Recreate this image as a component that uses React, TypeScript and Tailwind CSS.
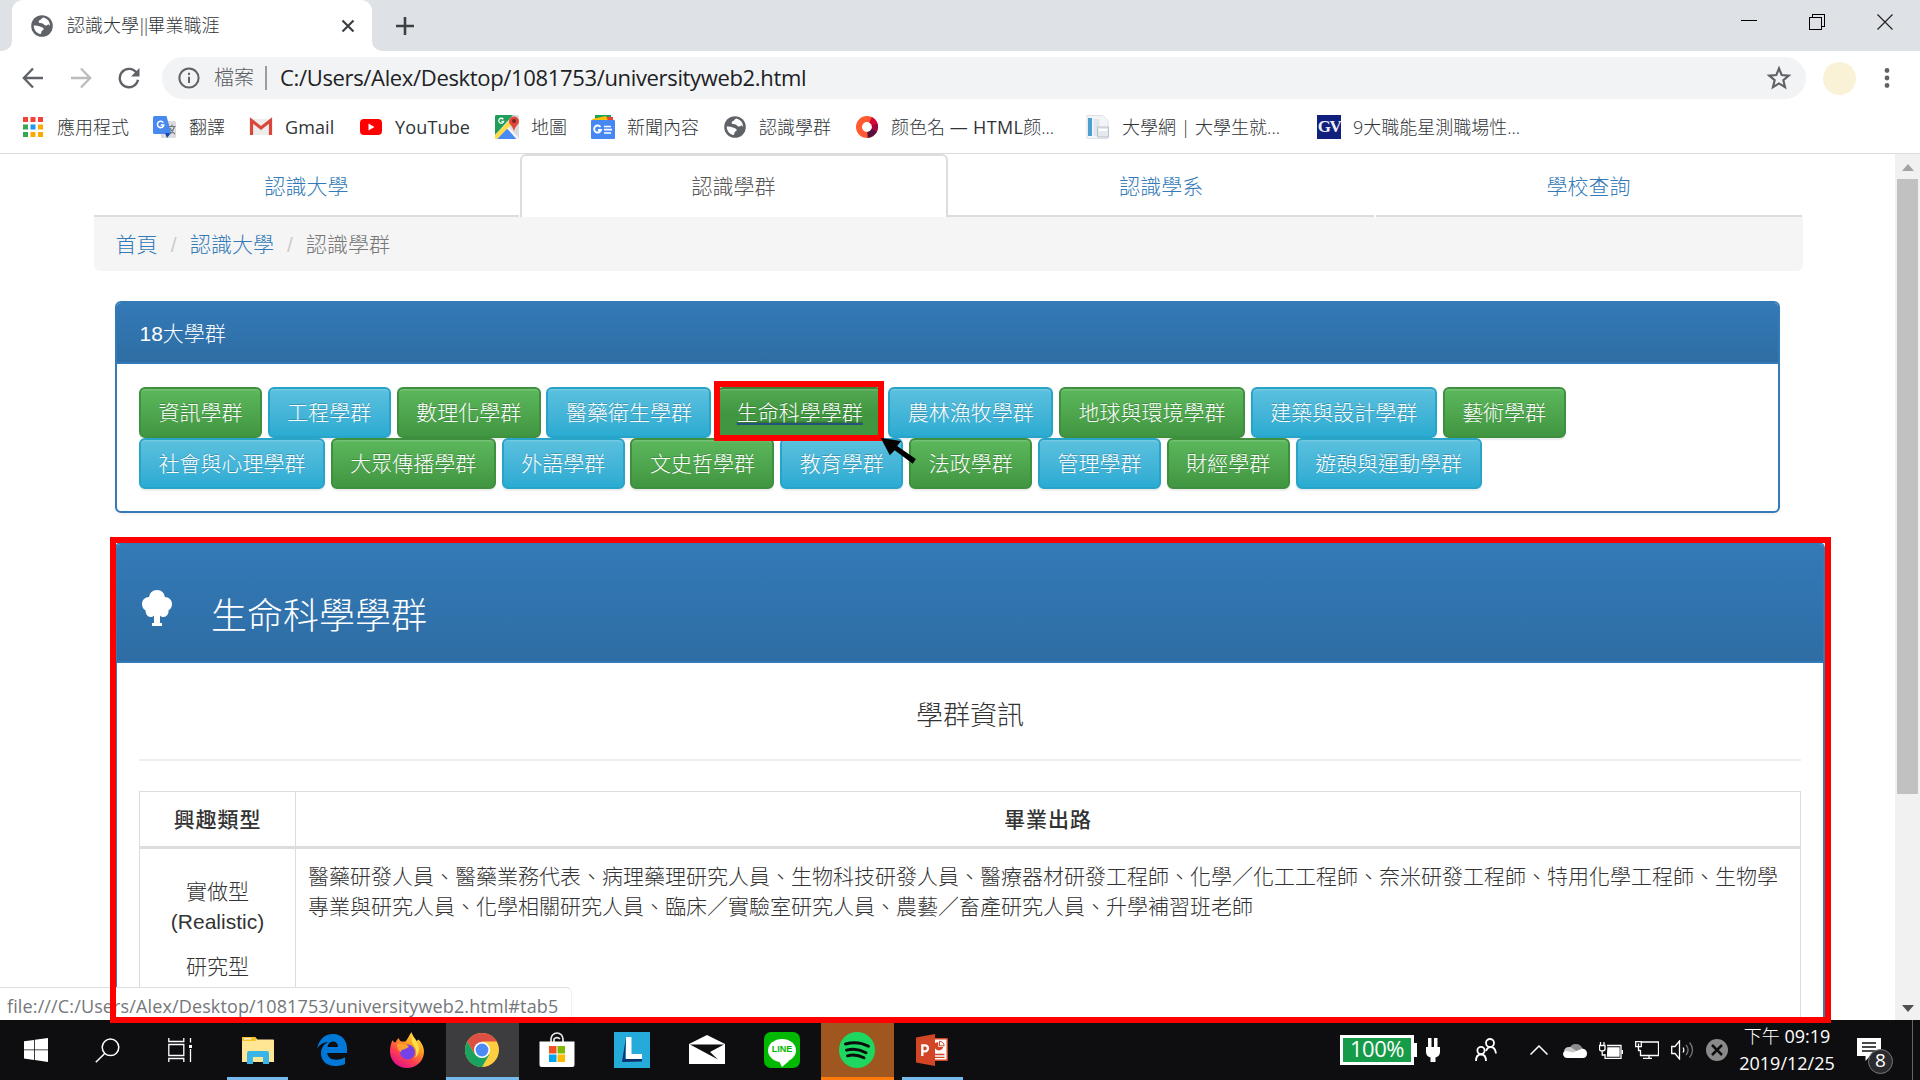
import React from "react";

const UI = "font-['Open_Sans','Noto_Sans_CJK_TC',sans-serif]";

function Globe({ className }: { className?: string }) {
  return (
    <svg viewBox="0 0 22 22" className={"h-[22px] w-[22px] shrink-0 " + (className ?? "")}>
      <circle cx="11" cy="11" r="10.8" fill="#5f6368" />
      <path d="M12.2 2.6c-1.5.4-1.3 1.6-2.7 2.2-1.6.6-2.2 1.6-1.6 2.6.8 1.2 2.2.6 3.6 1 1.700.5 1.800 1.900 3.200 2.100 1.500.2 1.900-1.300 2.900-1 .9.300 1.100 1.300 1.400 1.800.3-4.200-2.500-7.800-6.800-8.700z" fill="#fff" />
      <path d="M2.700 10.600c1.800-.2 4.300 0 6.200.9 1.800.8 3.800 1.200 3.800 2.600 0 1.300-1.700 1.300-2.200 2.300-.4.9 0 1.900-.9 2.700-3.800-.6-6.900-4.100-6.900-8.500z" fill="#fff" />
    </svg>
  );
}

function TabStrip() {
  return (
    <div className="flex h-[51px] bg-white">
      <div className="w-3 rounded-br-[10px] bg-[#dee1e6]" />
      <div className="w-[360px] bg-[#dee1e6]">
        <div className="flex h-full items-center rounded-t-[11px] bg-white pl-[19px]">
          <Globe />
          <span className="ml-[14px] w-[274px] whitespace-nowrap text-[18px] font-light text-[#303438]">認識大學<span className="-ml-[2px] mr-[2px] tracking-[-5.500px]">||</span>畢業職涯</span>
          <svg viewBox="0 0 14 14" className="h-[14px] w-[14px]" stroke="#3c4043" strokeWidth="2.200"><path d="M1.500 1.500l11 11M12.500 1.500l-11 11" /></svg>
        </div>
      </div>
      <div className="flex flex-1 items-center justify-between rounded-bl-[10px] bg-[#dee1e6] pl-6">
        <svg viewBox="0 0 18 18" className="h-[18px] w-[18px]" stroke="#3c4043" strokeWidth="2.600"><path d="M9 0v18M0 9h18" /></svg>
        <div className="flex gap-[52px] self-start pr-[27px] pt-[14px]">
          <svg viewBox="0 0 16 16" className="h-4 w-4" stroke="#000" shapeRendering="crispEdges"><path d="M0 6.500h16" /></svg>
          <svg viewBox="0 0 16 16" className="h-4 w-4" stroke="#000" fill="none" shapeRendering="crispEdges"><path d="M.5 3.500h11.500v11.500h-11.500zM3.500 3.500v-3h12v11.500h-3.500" /></svg>
          <svg viewBox="0 0 16 16" className="h-4 w-4" stroke="#222" strokeWidth="1.200"><path d="M.5.500l15 15M15.500.500l-15 15" /></svg>
        </div>
      </div>
    </div>
  );
}

function Toolbar() {
  return (
    <div className="flex h-[54px] items-center bg-white pl-[22px] [&>svg]:shrink-0">
      <svg viewBox="0 0 22 22" className="h-[22px] w-[22px]" fill="none" stroke="#5f6368" strokeWidth="2.300"><path d="M21 11H2M11 1.500L1.800 11l9.200 9.500" /></svg>
      <svg viewBox="0 0 22 22" className="ml-[26px] h-[22px] w-[22px]" fill="none" stroke="#babcbe" strokeWidth="2.300"><path d="M1 11h19M11 1.500l9.200 9.500-9.200 9.500" /></svg>
      <svg viewBox="0 0 22 22" className="ml-[26px] h-[22px] w-[22px]" fill="none" stroke="#5f6368" strokeWidth="2.400"><path d="M18.500 5.800A9.200 9.200 0 1 0 20 12.800" /><path d="M21.500 1v8.500h-8.500z" fill="#5f6368" stroke="none" /></svg>
      <div className="ml-[22px] flex h-[42px] w-[1644px] items-center rounded-full bg-[#f1f3f4] pl-4">
        <svg viewBox="0 0 22 22" className="h-[22px] w-[22px]" fill="none" stroke="#5f6368" strokeWidth="2"><circle cx="11" cy="11" r="9.600" /><path d="M11 9.700v6.300M11 5.800v2.200" /></svg>
        <span className="ml-[14px] w-[41px] whitespace-nowrap text-[20px] font-light text-[#5c6064]">檔案</span>
        <span className="ml-[10px] h-6 w-[2px] bg-[#9a9da0]" />
        <span className="ml-[13px] flex-1 whitespace-nowrap pb-[2px] text-[22px] tracking-[-0.340px] text-[#202124]">C:/Users/Alex/Desktop/1081753/universityweb2.html</span>
        <svg viewBox="0 0 24 24" className="mr-[14px] h-[26px] w-[26px]" fill="none" stroke="#5f6368" strokeWidth="2"><path d="M12 3.200l2.500 6.100 6.500.5-5 4.200 1.600 6.500-5.600-3.500-5.600 3.500L8 14 3 9.800l6.500-.5z" /></svg>
      </div>
      <div className="ml-[17px] h-[33px] w-[33px] rounded-full bg-[#f9f2d7]" />
      <svg viewBox="0 0 6 20" className="ml-[28px] h-5 w-[6px]" fill="#5f6368"><circle cx="3" cy="2.500" r="2.400" /><circle cx="3" cy="10" r="2.400" /><circle cx="3" cy="17.500" r="2.400" /></svg>
    </div>
  );
}

const appColors = ["#f44336", "#f44336", "#f44336", "#34a853", "#2196f3", "#fbab00", "#34a853", "#fbab00", "#fbab00"];

const icons: Record<string, React.ReactNode> = {
  apps: (
    <svg viewBox="0 0 24 20" className="h-5 w-6">
      {appColors.map((c, i) => <rect key={i} x={2 + (i % 3) * 7.500} y={Math.floor(i / 3) * 7.500} width="5" height="5" fill={c} />)}
    </svg>
  ),
  translate: (
    <svg viewBox="0 0 24 24" className="h-6 w-6">
      <rect x="8" y="6" width="15" height="17" rx="1.500" fill="#dcdcdc" />
      <path d="M1.500 1h12l5 18h-17a1.500 1.500 0 0 1-1.500-1.500v-15A1.500 1.500 0 0 1 1.500 1z" fill="#4889f0" />
      <path d="M12 18h6l-4 5z" fill="#1a46b5" />
      <path d="M10.300 7.600A3.200 3.200 0 1 0 10.800 10H7.800" fill="none" stroke="#fff" strokeWidth="1.500" />
      <path d="M15.500 11.500h7M19 9.500v2M21.500 11.500c-1 3.500-3 6-5 7.500M17 13c1 2.500 3 4.500 5 6" fill="none" stroke="#6f7b85" strokeWidth="1.200" />
    </svg>
  ),
  gmail: (
    <svg viewBox="0 0 24 24" className="h-6 w-6">
      <path d="M2 4h20v16H2z" fill="#ececec" />
      <path d="M2.500 20V5.500L12 13l9.500-7.500V20" fill="none" stroke="#d8473a" strokeWidth="3.200" />
    </svg>
  ),
  youtube: (
    <svg viewBox="0 0 24 24" className="h-6 w-6">
      <rect x="1" y="4" width="22" height="16" rx="4" fill="#f00" />
      <path d="M9.500 8.500v7l6-3.500z" fill="#fff" />
    </svg>
  ),
  maps: (
    <svg viewBox="0 0 24 24" className="h-6 w-6">
      <rect width="24" height="24" rx="1.500" fill="#dcdcdc" />
      <path d="M1 0h17L0 20V1z" fill="#1e9e58" />
      <path d="M2 24l10-11 10 11z" fill="#4a8af4" />
      <path d="M0 20L16 4l3 3L2 24H0z" fill="#ffdc49" />
      <path d="M12 13.500l2-1.500 9 10v2h-1.500z" fill="#f6f6f6" />
      <path d="M19 1.500a5 5 0 0 0-5 5c0 3 3.500 4 5 9.500 1.500-5.500 5-6.500 5-9.500a5 5 0 0 0-5-5z" fill="#e0453a" />
      <circle cx="19" cy="6" r="2" fill="#7c2420" />
      <path d="M8.300 4.300A2.500 2.500 0 1 0 8.700 6.300H6.500" fill="none" stroke="#fff" strokeWidth="1.300" />
    </svg>
  ),
  news: (
    <svg viewBox="0 0 24 24" className="h-6 w-6">
      <path d="M4 0h16v6H4z" fill="#1ca256" />
      <path d="M13 2l9 0v6h-9z" fill="#ee4031" />
      <path d="M1 4l14-3 3 7H3z" fill="#ffc107" />
      <rect y="5" width="24" height="19" rx="1" fill="#4687f4" />
      <path d="M9.500 12A3.500 3.500 0 1 0 10 15H7" fill="none" stroke="#fff" strokeWidth="1.900" />
      <path d="M13 11.500h7M13 14.700h8M13 18h7" stroke="#fff" strokeWidth="1.700" />
    </svg>
  ),
  globe: <Globe className="mx-px" />,
  ring: (
    <svg viewBox="0 0 24 24" className="h-6 w-6" fill="none" strokeWidth="6">
      <circle cx="12" cy="12" r="8" stroke="#ff5a30" />
      <path d="M15.500 4.800a8 8 0 0 1 4.400 8" stroke="#d8063a" />
      <path d="M19.600 9.500a8 8 0 0 1-1 7" stroke="#9c083f" />
      <path d="M19 15.500a8 8 0 0 1-6.500 4.500" stroke="#55103f" />
    </svg>
  ),
  doc: (
    <svg viewBox="0 0 24 24" className="h-6 w-6">
      <path d="M1 .5h16l5 5v18H1z" fill="#f3f5f8" stroke="#dde1e6" />
      <path d="M2 3h4v18H2z" fill="#4ba0cf" />
      <path d="M7.500 4h6v17h-6z" fill="#dfe6ee" />
      <path d="M11.500 12h11v10h-11z" fill="#e4e8ef" stroke="#b9c0cb" />
      <path d="M13 15h8" stroke="#fff" strokeWidth="2" />
    </svg>
  ),
  gv: (
    <span className="flex h-6 w-6 items-center justify-center overflow-hidden bg-[#10207c] font-['Liberation_Serif',serif] text-[17px] font-bold tracking-[-1.500px] text-[#eef0f8]">GV</span>
  ),
};

function BookmarkItem({ icon, label, box, text }: { icon: string; label: React.ReactNode; box: string; text?: string }) {
  return (
    <div className={"flex shrink-0 items-center " + box}>
      {icons[icon]}
      <span className={"ml-3 whitespace-nowrap text-[18px] text-[#303438] " + (text ?? "font-light")}>{label}</span>
    </div>
  );
}

function Bookmarks() {
  return (
    <div className="flex h-[49px] items-center border-b border-[#d9dbde] bg-white pb-[4px] pl-[21px]">
      <BookmarkItem icon="apps" label="應用程式" box="w-[132px]" />
      <BookmarkItem icon="translate" label="翻譯" box="w-[96px]" />
      <BookmarkItem icon="gmail" label="Gmail" box="w-[110px]" text="font-normal tracking-[0.100px]" />
      <BookmarkItem icon="youtube" label="YouTube" box="w-[136px]" text="font-normal tracking-[0.150px]" />
      <BookmarkItem icon="maps" label="地圖" box="w-[96px]" />
      <BookmarkItem icon="news" label="新聞內容" box="w-[132px]" />
      <BookmarkItem icon="globe" label="認識學群" box="w-[132px]" />
      <BookmarkItem icon="ring" label={<>颜色名 <span className="font-normal tracking-[0.350px]">— HTML</span>颜...</>} box="w-[231px]" />
      <BookmarkItem icon="doc" label="大學網 | 大學生就..." box="w-[231px]" />
      <BookmarkItem icon="gv" label="9大職能星測職場性..." box="w-[231px]" />
    </div>
  );
}

function NavTab({ label, active }: { label: string; active?: boolean }) {
  return active ? (
    <div className="-ml-px flex items-center justify-center rounded-t-[6px] border-2 border-b-0 border-[#ddd] pr-px pt-px text-[#555]">{label}</div>
  ) : (
    <div className="mr-[1.500px] flex items-center justify-center border-b-2 border-[#ddd] pt-[5px] text-[#337ab7]">{label}</div>
  );
}

const groups = [
  ["資訊學群", "工程學群", "數理化學群", "醫藥衛生學群", "生命科學學群", "農林漁牧學群", "地球與環境學群", "建築與設計學群", "藝術學群"],
  ["社會與心理學群", "大眾傳播學群", "外語學群", "文史哲學群", "教育學群", "法政學群", "管理學群", "財經學群", "遊憩與運動學群"],
];

const green = "border-[#3e8f3e] bg-linear-to-b from-[#5cb85c] to-[#419641]";
const blue = "border-[#28a4c9] bg-linear-to-b from-[#5bc0de] to-[#2aabd2]";
const hovered = "border-[#398439] bg-[#419641] bg-[linear-gradient(#51a951,#419641)] bg-[length:100%_25px] bg-no-repeat underline decoration-[#23527c] decoration-2 underline-offset-[3px]";

function GroupButton({ label, tone }: { label: string; tone: string }) {
  return (
    <button className={"h-[51px] whitespace-nowrap rounded-[6px] border-2 border-solid px-[17.500px] text-[21px] leading-[46px] text-white shadow-[inset_0_1.500px_0_rgba(255,255,255,.15),0_1.500px_1.500px_rgba(0,0,0,.075)] [text-shadow:0_-1.500px_0_rgba(0,0,0,.2)] " + tone}>
      {label}
    </button>
  );
}

function Page() {
  return (
    <div className="h-[866px] w-[1895px] overflow-hidden bg-white pl-[93.500px] font-['Liberation_Sans','Noto_Sans_CJK_TC',sans-serif] text-[21px] font-light leading-[30px] text-[#333]">
      <div className="grid h-[63px] w-[1709.500px] grid-cols-4">
        <NavTab label="認識大學" />
        <NavTab label="認識學群" active />
        <NavTab label="認識學系" />
        <NavTab label="學校查詢" />
      </div>
      <div className="flex h-[54px] w-[1709.500px] items-center rounded-b-[6px] bg-[#f5f5f5] pl-[22px] pt-px">
        <span className="text-[#337ab7]">首頁</span>
        <span className="w-[32.500px] text-center text-[#ccc]">/</span>
        <span className="text-[#337ab7]">認識大學</span>
        <span className="w-[32px] text-center text-[#ccc]">/</span>
        <span className="text-[#777]">認識學群</span>
      </div>

      <div className="ml-[21.500px] mt-[30px] h-[212px] w-[1665px] overflow-hidden rounded-[6px] border-2 border-[#337ab7] shadow-[0_1.500px_3px_rgba(0,0,0,.05)]">
        <div className="flex h-[61px] items-center border-b-2 border-[#337ab7] bg-linear-to-b from-[#337ab7] to-[#2e6da4] pl-[22.500px] pt-[2px] text-white">18大學群</div>
        <div className="pl-[22px] pt-[23px]">
          {groups.map((row, r) => (
            <div key={r} className="flex gap-[5.840px]">
              {row.map((g, i) => (
                <GroupButton key={g} label={g} tone={r === 0 && i === 4 ? hovered : (i + r) % 2 === 0 ? green : blue} />
              ))}
            </div>
          ))}
        </div>
      </div>

      <div className="ml-[21.500px] mt-[29px] h-[600px] w-[1710px] overflow-hidden rounded-[6px] border-2 border-[#337ab7]">
        <div className="flex h-[119px] border-b-2 border-[#337ab7] bg-linear-to-b from-[#337ab7] to-[#2e6da4] pl-[25px] text-white">
          <svg viewBox="0 0 30 36" className="mt-[46px] h-9 w-[30px]" fill="#fff">
            <path d="M15 0c-4.500 0-7.500 3-7.800 7C3 7 0 10 0 14c0 3.500 1.500 5.300 3.500 6.300C3.500 24 5.500 27 8.500 27c1.500 0 2.500-.5 3.500-1.500V33H10v3h10v-3h-2v-7.500c1 1 2 1.500 3.500 1.500 3 0 5.500-3 5-6.700 2-1 3.500-3.300 3.500-6.300 0-4-3-7-7.200-7C22.500 3 19.500 0 15 0z" />
          </svg>
          <div className="ml-[39px] mt-[55px] text-[36px] leading-[36px]">生命科學學群</div>
        </div>
        <div className="pl-[22px] pr-[22px]">
          <div className="h-[98px] border-b-2 border-[#eee] pt-[37px] text-center text-[27px] leading-[32px]">學群資訊</div>
          <table className="mt-[30px] w-[1662px] table-fixed border-collapse border border-[#ddd]">
            <thead>
              <tr className="h-[56px] border-b-3 border-[#ddd]">
                <th className="w-[156px] border-r border-[#ddd] pt-[2px] font-medium tracking-[0.900px]">興趣類型</th>
                <th className="pt-[2px] font-medium tracking-[0.900px]">畢業出路</th>
              </tr>
            </thead>
            <tbody>
              <tr className="h-[300px] align-top">
                <td className="border-r border-[#ddd] pt-[28px] text-center">
                  <p className="mb-[15px]">實做型<br />(Realistic)</p>
                  <p>研究型</p>
                </td>
                <td className="px-3 pt-[13px]">
                  醫藥研發人員、醫藥業務代表、病理藥理研究人員、生物科技研發人員、醫療器材研發工程師、化學／化工工程師、奈米研發工程師、特用化學工程師、生物學專業與研究人員、化學相關研究人員、臨床／實驗室研究人員、農藝／畜產研究人員、升學補習班老師
                </td>
              </tr>
            </tbody>
          </table>
        </div>
      </div>
    </div>
  );
}

function Scrollbar() {
  return (
    <div className="flex h-[866px] w-[25px] flex-col items-center bg-[#f1f1f1] pt-[10px]">
      <svg viewBox="0 0 12 7" className="h-[7px] w-3"><path d="M6 0l6 7H0z" fill="#a3a3a3" /></svg>
      <div className="mt-[8px] h-[615px] w-[21px] bg-[#c1c1c1]" />
      <svg viewBox="0 0 12 7" className="mb-[8px] mt-auto h-[7px] w-3"><path d="M0 0h12L6 7z" fill="#505050" /></svg>
    </div>
  );
}

function Slot({ children, bg, line }: { children: React.ReactNode; bg?: string; line?: string }) {
  return (
    <div className={"mr-[2px] flex h-[60px] w-[73px] flex-col items-center " + (bg ?? "")}>
      <div className="flex h-[57px] items-center pt-[3px]">{children}</div>
      {line && <div className={"h-[3px] " + line} />}
    </div>
  );
}

function Taskbar() {
  return (
    <div className="flex h-[60px] items-center bg-[#0e0e10] text-white">
      <div className="flex w-[221px] items-center">
        <svg viewBox="0 0 24 24" className="ml-6 h-6 w-6" fill="#fff"><path d="M0 3.300l10-1.400v9.600H0zM10.800 1.800L24 0v11.500H10.800zM0 12.300h10v9.700L0 20.600zM10.800 12.300H24V24l-13.200-1.900z" /></svg>
        <svg viewBox="0 0 25 25" className="ml-[47px] h-[25px] w-[25px]" fill="none" stroke="#fff" strokeWidth="1.500"><circle cx="15.500" cy="9.300" r="8.300" /><path d="M9.700 15.500L.8 24.300" /></svg>
        <svg viewBox="0 0 24 24" className="ml-[48px] h-6 w-6" fill="none" stroke="#fff" strokeWidth="1.300"><path d="M.8 0v3.500h15V0M.8 24v-3.500h15V24M.8 6.500h15v11H.8zM22.500 0v4.500M22.500 11v13" /><path d="M21 7h3v3h-3z" fill="#fff" stroke="none" /></svg>
      </div>
      <Slot line="w-[61px] bg-[#76b9ed]">
        <svg viewBox="0 0 32 28" className="h-7 w-8"><path d="M0 2a1 1 0 0 1 1-1h12l2.500 2.500H31a1 1 0 0 1 1 1V26H0z" fill="#ffe694" /><path d="M0 5V2a1 1 0 0 1 1-1h12l2 2.500L13 5z" fill="#f8c12c" /><path d="M2 2.800h7" stroke="#fff" strokeWidth="1.200" /><path d="M5 28V17a2 2 0 0 1 2-2h18a2 2 0 0 1 2 2v11h-6v-7h-10v7z" fill="#3bb4e7" /></svg>
      </Slot>
      <Slot>
        <svg viewBox="0 0 30 32" className="mr-px h-8 w-[30px]" fill="#0078d7"><path d="M.3 14.400C1.700 6 7.500 0 16 0c9 0 14 6.500 14 14.500V19H10.200c.5 4.500 4 6.700 8.800 6.700 3.500 0 6.500-1 9-2.500V30c-3 1.500-6.500 2-10 2C9.500 32 4 26.500 4 19.500c0-5.500 3-9.500 7.500-11.500-5 .3-9 2.400-11.200 6.400zM10.500 13H21c0-3-1.500-5.500-5-5.500-3 0-5 2.200-5.500 5.500z" /></svg>
      </Slot>
      <Slot>
        <svg viewBox="0 0 34 36" className="mr-px h-9 w-[34px]">
          <defs><linearGradient id="fox" x1=".9" y1="0" x2=".3" y2="1"><stop offset="0" stopColor="#fff44f" /><stop offset=".4" stopColor="#ff9a1f" /><stop offset=".7" stopColor="#ff4050" /><stop offset="1" stopColor="#e2118a" /></linearGradient></defs>
          <path d="M2.500 8c.5 1.500 1.500 2.500 3 2.500 1-1.500 1.500-3.500 3.500-4.500 0 2 1 3 2.500 3.500h4c2.500-3 3.500-6 6-9.500 1 5 4 6 5 9l2-1.500c3 3 5.500 7.500 5.500 12C34 29 26.500 36 17 36S0 28.500 0 19.500C0 15 1 11 2.500 8z" fill="url(#fox)" />
          <circle cx="17.500" cy="20" r="7.500" fill="#7542e5" />
          <path d="M7 12c5-1 9-.5 12 3-2 0-3 2.500-5.500 2.500-2 0-2.500 1-2.500 2.500-3-1-4-5-4-8z" fill="#ffa02e" />
          <path d="M22 2c2 6 7 9 7 15 0 4-2 7-4 9 4-9-2-12-3-16z" fill="#ffe24a" />
        </svg>
      </Slot>
      <Slot bg="bg-[#3d3d3f]" line="w-[73px] bg-[#76b9ed]">
        <svg viewBox="0 0 34 34" className="mr-px h-[34px] w-[34px]">
          <circle cx="17" cy="17" r="17" fill="#ffcd40" />
          <path d="M2.300 8.500A17 17 0 0 1 31.700 8.500H17L9.500 21z" fill="#dd4f43" />
          <path d="M2.300 8.500A17 17 0 0 0 17 34l7.500-12.700L17 25l-7.500-4z" fill="#1aa260" />
          <circle cx="17" cy="17" r="8" fill="#fff" /><circle cx="17" cy="17" r="6.400" fill="#4c8bf5" />
        </svg>
      </Slot>
      <Slot>
        <svg viewBox="0 0 36 36" className="mr-[2px] h-9 w-9"><path d="M12 10V7a6 6 0 0 1 12 0v3M15 10V7a4 4 0 0 1 6 0" fill="none" stroke="#e8e8e8" strokeWidth="1.700" /><path d="M.5 9.500h35V33a2 2 0 0 1-2 2h-31a2 2 0 0 1-2-2z" fill="#fff" /><path d="M10 14h7.500v7.500H10z" fill="#f25022" /><path d="M18.500 14H26v7.500h-7.500z" fill="#7fba00" /><path d="M10 22.500h7.500V30H10z" fill="#00a4ef" /><path d="M18.500 22.500H26V30h-7.500z" fill="#ffb900" /></svg>
      </Slot>
      <Slot>
        <svg viewBox="0 0 36 36" className="mr-px h-9 w-9"><path d="M0 0h36v36H0z" fill="#25abda" /><path d="M12 5L8 30l3-4zM8 30l20-.5v-3H11z" fill="#0b2f6b" /><path d="M12 5h5.500v17H28v5H12z" fill="#fff" /></svg>
      </Slot>
      <Slot>
        <svg viewBox="0 0 36 30" className="mr-px h-[30px] w-9"><path d="M0 9L18 0l18 9v20H0z" fill="#fff" /><path d="M1 9.500h34L21 17l8 7.500z" fill="#0e0e10" /></svg>
      </Slot>
      <Slot>
        <div className="mr-px flex h-9 w-9 items-center justify-center rounded-[7px] bg-[#00b900]">
          <div className="relative flex h-[23px] w-[28px] items-center justify-center rounded-[50%] bg-white font-['Liberation_Sans',sans-serif] text-[9px] font-bold text-[#00b900]">
            LINE
            <svg viewBox="0 0 10 8" className="absolute left-[11px] top-[20px] h-2 w-[10px]"><path d="M0 2h10L3 8z" fill="#fff" /></svg>
          </div>
        </div>
      </Slot>
      <Slot bg="bg-[#a0571f]" line="w-[73px] bg-[#ff7a0a]">
        <svg viewBox="0 0 36 36" className="mr-px h-9 w-9"><circle cx="18" cy="18" r="18" fill="#1ed760" /><path d="M6.500 12c7-2 16-1.500 23 2.300M7.500 18.200c6-1.700 13-1 19.500 2.500M8.500 23.800c5-1.300 11-.8 16.500 2" fill="none" stroke="#0b0b0b" strokeWidth="2.900" strokeLinecap="round" /></svg>
      </Slot>
      <Slot line="w-[61px] bg-[#76b9ed]">
        <svg viewBox="0 0 32 32" className="mr-px h-8 w-8">
          <path d="M17 4h14a1 1 0 0 1 1 1v21a1 1 0 0 1-1 1H17z" fill="#d24625" />
          <path d="M18 5.500h12.500v20H18z" fill="#fff" />
          <path d="M19 20.500h9.500M19 23.300h9.500" stroke="#d24625" strokeWidth="1.300" />
          <path d="M19 9.300a4.600 4.600 0 1 0 8.300 3.700h-5V8.200a4.500 4.500 0 0 0-3.300 1.100z" fill="#d24625" />
          <path d="M23.500 7.300v4.500h4.700a4.700 4.700 0 0 0-4.700-4.500z" fill="#fff" stroke="#d24625" />
          <path d="M0 3.500L19 0v32L0 28.500z" fill="#d24625" />
          <path d="M6.300 22V11.300h2.700a2.900 2.900 0 0 1 0 6H6.300" fill="none" stroke="#fff" strokeWidth="2.300" />
        </svg>
      </Slot>
      <div className="flex flex-1 items-center pl-[369px] [&>svg]:shrink-0">
        <div className="flex h-[30px] w-[74px] shrink-0 items-center justify-center border-[3px] border-white bg-[#169b48] text-[22px] leading-none tracking-[-0.500px]"><span className="-mt-[4px]">100%</span></div>
        <div className="h-[14px] w-[3px] shrink-0 bg-white" />
        <svg viewBox="0 0 14 24" className="ml-[9px] h-6 w-[14px]" fill="#fff"><path d="M2 0h3.500v9H8V0h3.500v9H14v5c0 3-2 5-4.500 5.500V24h-5v-4.500C2 19 0 17 0 14V9h2z" /></svg>
        <svg viewBox="0 0 22 24" className="ml-[35px] h-6 w-[22px]" fill="none" stroke="#fff" strokeWidth="1.800"><circle cx="15" cy="5" r="4" /><circle cx="6" cy="12.500" r="3.600" /><path d="M1 23c0-4 2-6.500 5-6.500s5 2.500 5 6.500M11 13c1-2.500 2.500-4 4.500-4 3 0 5 2.500 5.500 6.500" /></svg>
        <svg viewBox="0 0 18 10" className="ml-[33px] h-[10px] w-[18px]" fill="none" stroke="#fff" strokeWidth="1.500"><path d="M.5 9.500L9 1l8.500 8.500" /></svg>
        <svg viewBox="0 0 24 16" className="ml-[15px] h-4 w-6"><path d="M6 8a7 7 0 0 1 13-2.500L22 9 6 12z" fill="#8b8b8b" /><path d="M1 9a5 5 0 0 1 8-3l9 6H3z" fill="#c9c9c9" /><path d="M4 16a4 4 0 0 1-3-6.500c3-1.500 6 .5 9 1l8-3.500c4-1 6 1.500 6 4.500s-2 4.500-4 4.500z" fill="#fff" /></svg>
        <svg viewBox="0 0 24 17" className="ml-3 h-[17px] w-6" fill="none" stroke="#fff" strokeWidth="1.300"><path d="M8 3.500h14v13H6V12M23.500 8v4M1.500 0v3M5 0v3M.500 3.500H6V7c0 1.500-1.500 2-3 2s-2.500-.5-2.500-2zM3.200 9v4H6" /><path d="M9 6h11v8H8.500z" fill="#fff" /></svg>
        <svg viewBox="0 0 24 18" className="ml-3 h-[18px] w-6" fill="none" stroke="#fff" strokeWidth="1.300"><path d="M7 1h16.500v13.500h-18V9M14 14.500v3M8 17.400h9M.7.700h5.600v5H.7zM3.500 2.500v7h2" /></svg>
        <svg viewBox="0 0 24 20" className="ml-3 h-5 w-6" fill="none" stroke="#fff" strokeWidth="1.300"><path d="M.7 6.500H4L8.500 1v18L4 13.500H.7zM12 7.500c1 1.500 1 3.500 0 5" /><path d="M15 5c2.500 3 2.500 7 0 10M18.500 2.500c4 4.500 4 10.500 0 15" stroke="#777" /></svg>
        <svg viewBox="0 0 22 22" className="ml-[11px] h-[22px] w-[22px]"><circle cx="11" cy="11" r="11" fill="#8a8a8a" /><path d="M6 6l10 10M16 6L6 16" stroke="#0e0e10" strokeWidth="2.500" /></svg>
        <div className="ml-[9px] flex w-[100px] shrink-0 flex-col items-center whitespace-nowrap text-[18px] leading-[27px]"><span><span className="font-light">下午</span> 09:19</span><span>2019/12/25</span></div>
        <div className="relative ml-5 h-6 w-6 shrink-0">
          <svg viewBox="0 0 24 24" className="h-6 w-6"><path d="M0 0h24v18H13l-4.500 5v-5H0z" fill="#fff" /><path d="M5 5h14M5 9h14M5 13h14" stroke="#0e0e10" strokeWidth="1.300" /></svg>
          <span className="absolute left-[11px] top-[11px] flex h-[25px] w-[25px] items-center justify-center rounded-full border border-[#777] bg-[#2b2b2d] pb-[2px] text-[19px] leading-none">8</span>
        </div>
        <div className="ml-[31px] h-[60px] w-px shrink-0 bg-[#666]" />
      </div>
    </div>
  );
}

export default function App() {
  return (
    <div className={"relative h-[1080px] w-[1920px] overflow-hidden bg-white " + UI}>
      <TabStrip />
      <Toolbar />
      <Bookmarks />
      <div className="flex">
        <Page />
        <Scrollbar />
      </div>
      <Taskbar />

      <div className="absolute left-0 top-[987px] flex h-[33px] w-[572px] items-center rounded-tr-[6px] border-r border-t border-r-[#eef0f1] border-t-[#dcdee0] bg-white pl-[7px] pt-[5px] text-[18px] tracking-[0.130px] text-[#74777a]">
        <span className="whitespace-nowrap">file:///C:/Users/Alex/Desktop/1081753/universityweb2.html#tab5</span>
      </div>
      <div className="absolute left-[714px] top-[381px] h-[60px] w-[170px] border-[6px] border-[#f00]" />
      <div className="absolute left-[110px] top-[537px] h-[486px] w-[1721px] border-[6px] border-[#f00]" />
      <svg viewBox="880 437 38 28" className="absolute left-[880px] top-[437px] h-7 w-[38px]"><path d="M880.800 438L901.200 441L897.100 446L915.900 459L912.700 463.700L894.700 450.300L889.800 455.300z" fill="#000" /></svg>
    </div>
  );
}
